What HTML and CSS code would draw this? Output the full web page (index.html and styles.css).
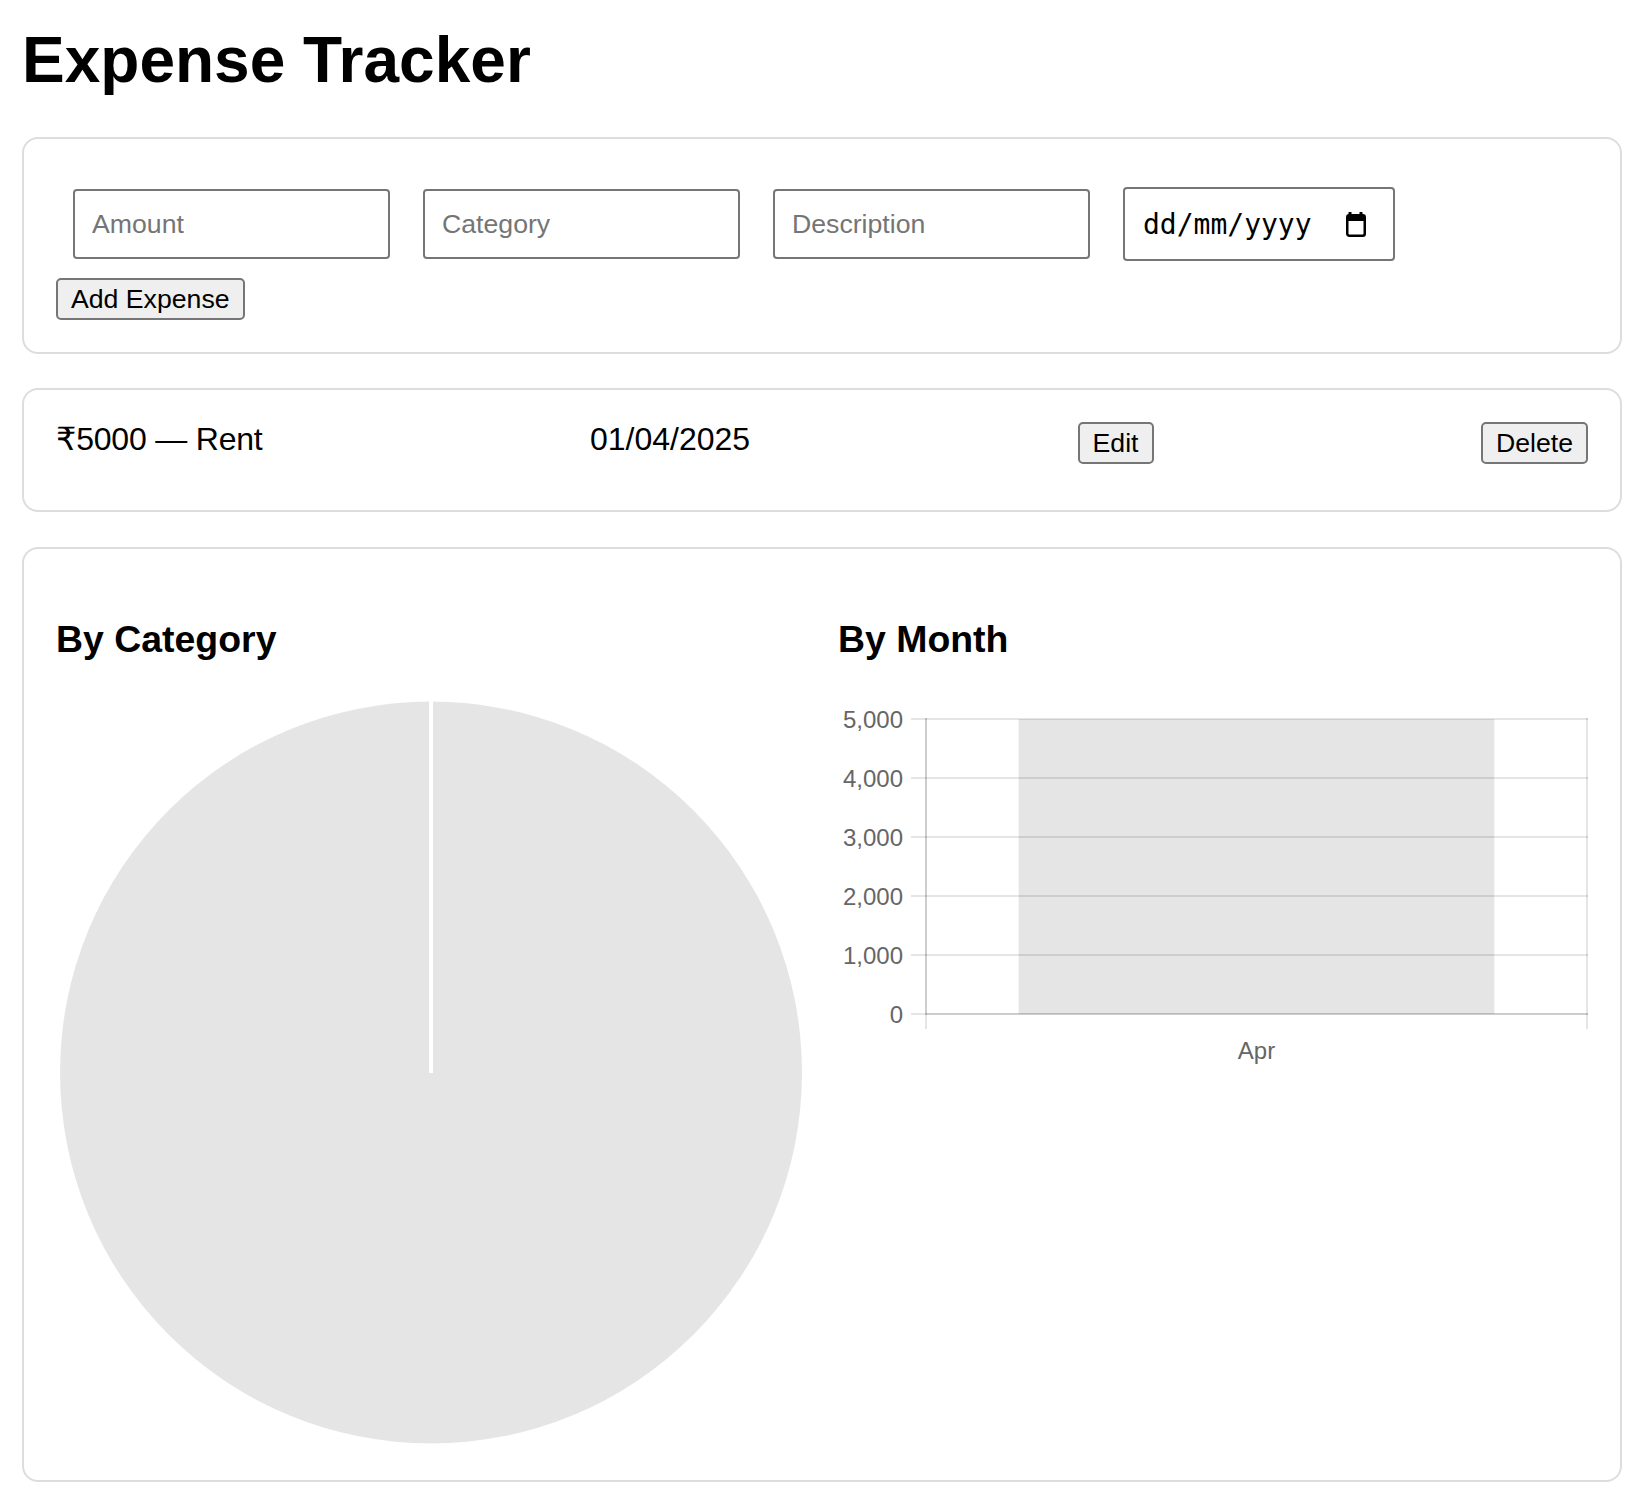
FILE: index.html
```html
<!DOCTYPE html>
<html lang="en">
<head>
<meta charset="utf-8">
<title>Expense Tracker</title>
<link rel="stylesheet" href="styles.css">
</head>
<body>
<div class="page">
  <h1 class="title">Expense Tracker</h1>

  <section class="card form-card">
    <div class="fields">
      <input class="field" type="text" placeholder="Amount">
      <input class="field" type="text" placeholder="Category">
      <input class="field" type="text" placeholder="Description">
      <div class="date-field">
        <span class="date-text">dd/mm/yyyy</span>
        <svg class="cal-icon" width="22" height="26" viewBox="0 0 22 26">
          <rect x="3.5" y="1" width="3" height="4" fill="#000"/>
          <rect x="14.5" y="1" width="3" height="4" fill="#000"/>
          <rect x="2.25" y="4.25" width="17.5" height="20.5" rx="2" fill="none" stroke="#000" stroke-width="2.5"/>
          <rect x="2" y="4" width="18" height="6" rx="1.5" fill="#000"/>
        </svg>
      </div>
    </div>
    <button class="btn" type="button">Add Expense</button>
  </section>

  <section class="card item-card">
    <span class="item-label">₹5000 — Rent</span>
    <span class="item-date">01/04/2025</span>
    <button class="btn" type="button">Edit</button>
    <button class="btn" type="button">Delete</button>
  </section>

  <section class="card charts-card">
    <div class="chart-col">
      <h3 class="chart-title">By Category</h3>
      <svg class="chart" width="750" height="751" viewBox="0 0 750 751">
        <circle cx="375" cy="375.5" r="371" fill="rgba(0,0,0,0.1)"/>
        <line x1="375" y1="3" x2="375" y2="376" stroke="#fff" stroke-width="4"/>
      </svg>
    </div>
    <div class="chart-col">
      <h3 class="chart-title">By Month</h3>
      <svg class="chart" width="750" height="375" viewBox="0 0 750 375">
        <rect x="180.6" y="22" width="475.8" height="295" fill="rgba(0,0,0,0.1)"/>
        <g stroke="rgba(0,0,0,0.1)" stroke-width="2">
          <line x1="73" y1="22" x2="750" y2="22"/>
          <line x1="73" y1="81" x2="750" y2="81"/>
          <line x1="73" y1="140" x2="750" y2="140"/>
          <line x1="73" y1="199" x2="750" y2="199"/>
          <line x1="73" y1="258" x2="750" y2="258"/>
          <line x1="73" y1="317" x2="750" y2="317"/>
          <line x1="88" y1="21" x2="88" y2="332"/>
          <line x1="749" y1="21" x2="749" y2="332"/>
          <line x1="88" y1="317" x2="750" y2="317"/>
          <line x1="88" y1="21" x2="88" y2="318"/>
        </g>
        <g class="tick" text-anchor="end">
          <text x="65" y="22" dominant-baseline="central">5,000</text>
          <text x="65" y="81" dominant-baseline="central">4,000</text>
          <text x="65" y="140" dominant-baseline="central">3,000</text>
          <text x="65" y="199" dominant-baseline="central">2,000</text>
          <text x="65" y="258" dominant-baseline="central">1,000</text>
          <text x="65" y="317" dominant-baseline="central">0</text>
        </g>
        <text class="tick" x="418.5" y="362" text-anchor="middle">Apr</text>
      </svg>
    </div>
  </section>
</div>
</body>
</html>
```

FILE: styles.css
```css
html, body {
  margin: 0;
  padding: 0;
  background: #fff;
}

body {
  font-family: "Liberation Sans", Arial, "DejaVu Sans", sans-serif;
  color: #000;
}

.page {
  width: 1600px;
  padding: 24px 22px;
}

.title {
  margin: 0 0 41px;
  font-size: 64px;
  line-height: 72px;
  font-weight: bold;
}

.card {
  border: 2px solid #ddd;
  border-radius: 16px;
  background: #fff;
  margin-bottom: 34px;
}

.form-card {
  padding: 32px;
}

.fields {
  display: flex;
  align-items: center;
  gap: 33px;
  padding: 16px 16px 17px 17px;
}

.field {
  box-sizing: border-box;
  width: 317px;
  height: 70px;
  margin: 0;
  padding: 0 17px;
  border: 2px solid #767676;
  border-radius: 4px;
  font-family: "Liberation Sans", Arial, sans-serif;
  font-size: 26.67px;
  color: #000;
  background: #fff;
  outline: none;
}

.field::placeholder {
  color: #757575;
}

.date-field {
  box-sizing: border-box;
  width: 272px;
  height: 74px;
  display: flex;
  align-items: center;
  padding-left: 18px;
  border: 2px solid #767676;
  border-radius: 4px;
  background: #fff;
}

.date-text {
  font-family: "DejaVu Sans Mono", "Liberation Mono", monospace;
  font-size: 28px;
  color: #000;
}

.cal-icon {
  margin-left: 33px;
  display: block;
}

.btn {
  box-sizing: border-box;
  height: 42px;
  margin: 0;
  padding: 0 13px;
  border: 2px solid #767676;
  border-radius: 5px;
  background: #efefef;
  font-family: "Liberation Sans", Arial, sans-serif;
  font-size: 26.67px;
  color: #000;
  line-height: 1;
}

.item-card {
  display: flex;
  justify-content: space-between;
  align-items: flex-start;
  padding: 32px 32px 46px;
  margin-bottom: 35px;
}

.item-label,
.item-date {
  font-size: 32px;
  line-height: 34px;
  font-family: "Liberation Sans", Arial, "DejaVu Sans", "Noto Sans", sans-serif;
}

.item-label {
  letter-spacing: -0.2px;
}

.charts-card {
  display: grid;
  grid-template-columns: 750px 750px;
  column-gap: 32px;
  padding: 32px;
  align-items: start;
}

.chart-title {
  margin: 37px 0;
  font-size: 37.44px;
  line-height: 42px;
  font-weight: bold;
}

.chart {
  display: block;
}

.tick {
  font-family: "Liberation Sans", Arial, sans-serif;
  font-size: 24px;
  fill: #666;
}
```
